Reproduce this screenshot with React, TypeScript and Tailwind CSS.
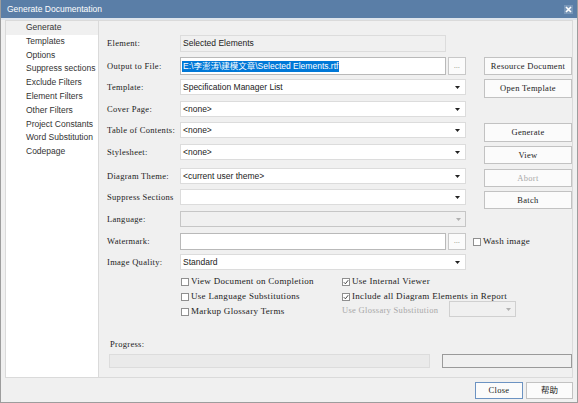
import React from "react";

const sans = "font-['Liberation_Sans','Noto_Sans_CJK_SC',sans-serif]";
const serif = "font-['Liberation_Serif','Noto_Sans_CJK_SC',serif] tracking-[0.3px]";

const navItems = [
  "Generate",
  "Templates",
  "Options",
  "Suppress sections",
  "Exclude Filters",
  "Element Filters",
  "Other Filters",
  "Project Constants",
  "Word Substitution",
  "Codepage",
];

type Row = {
  label: string;
  kind: "static" | "file" | "select" | "disabled";
  value?: string;
  mt: string;
  h: string;
};

const rows: Row[] = [
  { label: "Element:", kind: "static", value: "Selected Elements", mt: "mt-[14px]", h: "h-[17px]" },
  { label: "Output to File:", kind: "file", value: "E:\\李澎涛\\建模文章\\Selected Elements.rtf", mt: "mt-[5px]", h: "h-[18px]" },
  { label: "Template:", kind: "select", value: "Specification Manager List", mt: "mt-[4px]", h: "h-[16px]" },
  { label: "Cover Page:", kind: "select", value: "<none>", mt: "mt-[6px]", h: "h-[16px]" },
  { label: "Table of Contents:", kind: "select", value: "<none>", mt: "mt-[5px]", h: "h-[16px]" },
  { label: "Stylesheet:", kind: "select", value: "<none>", mt: "mt-[6px]", h: "h-[16px]" },
  { label: "Diagram Theme:", kind: "select", value: "<current user theme>", mt: "mt-[8px]", h: "h-[16px]" },
  { label: "Suppress Sections", kind: "select", value: "", mt: "mt-[5px]", h: "h-[16px]" },
  { label: "Language:", kind: "disabled", value: "", mt: "mt-[6px]", h: "h-[16px]" },
  { label: "Watermark:", kind: "file", value: "", mt: "mt-[6px]", h: "h-[17px]" },
  { label: "Image Quality:", kind: "select", value: "Standard", mt: "mt-[4px]", h: "h-[16px]" },
];

function Arrow({ muted }: { muted?: boolean }) {
  return (
    <svg width="5" height="3" viewBox="0 0 5 3" className="shrink-0">
      <path d="M0 0h5L2.5 3z" fill={muted ? "#b0b0b0" : "#222"} />
    </svg>
  );
}

function Check({ on }: { on?: boolean }) {
  return (
    <span className="flex h-[8px] w-[8px] shrink-0 items-center justify-center border border-[#8f8f8f] bg-white">
      {on && (
        <svg width="6" height="6" viewBox="0 0 6 6">
          <path d="M0.8 3.2 L2.4 4.8 L5.2 1.2" fill="none" stroke="#333" strokeWidth="0.9" />
        </svg>
      )}
    </span>
  );
}

function CheckItem({ label, on }: { label: string; on?: boolean }) {
  return (
    <div className="flex h-[15px] items-center gap-[2px]">
      <Check on={on} />
      <span className={`${serif} text-[9px] text-[#222]`}>{label}</span>
    </div>
  );
}

function Btn({ label, h, mt, muted }: { label: string; h: string; mt: string; muted?: boolean }) {
  return (
    <div
      className={`${mt} ${h} ml-[11px] flex w-[88px] items-center justify-center border border-[#c2c2c2] bg-[#fbfbfb] ${serif} text-[8.5px] ${muted ? "text-[#a8a8a8]" : "text-[#222]"}`}
    >
      {label}
    </div>
  );
}

function Control({ row }: { row: Row }) {
  if (row.kind === "static") {
    return (
      <div className={`flex h-full w-[266px] items-center border border-[#dcdcdc] bg-[#f0f0f0] px-[2px] ${sans} text-[8.5px] text-[#222]`}>
        {row.value}
      </div>
    );
  }
  if (row.kind === "file") {
    return (
      <div className="flex h-full items-stretch gap-[2px]">
        <div className={`flex w-[266px] items-center border border-[#b9b9b9] bg-white px-[1px] ${sans} text-[8.5px]`}>
          {row.value && <span className="bg-[#0078d7] px-[1px] leading-[11px] text-white">{row.value}</span>}
        </div>
        <div className={`flex w-[18px] items-center justify-center border border-[#c8c8c8] bg-[#fbfbfb] ${serif} text-[7px] text-[#777]`}>
          ...
        </div>
      </div>
    );
  }
  if (row.kind === "disabled") {
    return (
      <div className="flex h-full w-[286px] items-center justify-end border border-[#c6c6c6] bg-[#f0f0f0] pr-[4px]">
        <Arrow muted />
      </div>
    );
  }
  return (
    <div className={`flex h-full w-[286px] items-center justify-between border border-[#dcdcdc] bg-white pl-[2px] pr-[5px] ${sans} text-[8.5px] text-[#222]`}>
      <span>{row.value}</span>
      <Arrow />
    </div>
  );
}

export default function App() {
  return (
    <div className="flex h-[403px] w-[578px] flex-col border-x border-b border-[#9d9d9d] bg-[#f0f0f0]">
      {/* title bar */}
      <div className="flex h-[18px] shrink-0 items-center justify-between bg-[#5a7ea7] pl-[6px] pr-[4px]">
        <span className={`${sans} text-[8.5px] text-white`}>Generate Documentation</span>
        <svg width="9" height="9" viewBox="0 0 9 9">
          <rect width="9" height="9" fill="#7896b8" />
          <path d="M2 2L7 7M7 2L2 7" stroke="#fff" strokeWidth="1.6" />
        </svg>
      </div>
      <div className="h-[2px] shrink-0 bg-[#dde4ec]" />

      {/* main */}
      <div className="mx-[4px] flex h-[358px] shrink-0 border border-[#dadada]">
        <div className="w-[93px] shrink-0 border-r border-[#dadada] bg-white">
          {navItems.map((item, i) => (
            <div
              key={item}
              className={`h-[13.8px] pl-[20px] ${sans} text-[8.5px] leading-[13.8px] text-[#333] ${i === 0 ? "bg-[#f0f0f0]" : ""}`}
            >
              {item}
            </div>
          ))}
        </div>

        <div className="flex flex-1 flex-col">
          <div className="flex">
            {/* form */}
            <div className="ml-[8px] flex flex-col">
              {rows.map((row) => (
                <div key={row.label} className={`${row.mt} ${row.h} flex items-center`}>
                  <span className={`w-[73px] shrink-0 ${serif} text-[8.5px] text-[#222]`}>{row.label}</span>
                  <Control row={row} />
                </div>
              ))}
            </div>
            {/* side buttons */}
            <div className="ml-[7px] flex flex-col">
              <Btn label="Resource Document" mt="mt-[36px]" h="h-[18px]" />
              <Btn label="Open Template" mt="mt-[4px]" h="h-[19px]" />
              <Btn label="Generate" mt="mt-[25px]" h="h-[19px]" />
              <Btn label="View" mt="mt-[4px]" h="h-[18px]" />
              <Btn label="Abort" mt="mt-[5px]" h="h-[18px]" muted />
              <Btn label="Batch" mt="mt-[4px]" h="h-[18px]" />
              <div className="mt-[25px]">
                <CheckItem label="Wash image" />
              </div>
            </div>
          </div>

          {/* checkboxes */}
          <div className="mt-[4px] ml-[82px] grid grid-cols-[161px_1fr]">
            <CheckItem label="View Document on Completion" />
            <CheckItem label="Use Internal Viewer" on />
            <CheckItem label="Use Language Substitutions" />
            <CheckItem label="Include all Diagram Elements in Report" on />
            <CheckItem label="Markup Glossary Terms" />
            <div className="flex h-[15px] items-start">
              <span className={`w-[107px] ${serif} text-[8.5px] leading-[12px] text-[#a8a8a8]`}>Use Glossary Substitution</span>
              <div className="mt-[-3px] flex h-[16px] w-[67px] items-center justify-end border border-[#d0d0d0] bg-[#f0f0f0] pr-[4px]">
                <Arrow muted />
              </div>
            </div>
          </div>

          {/* progress */}
          <div className={`mt-[19px] ml-[11px] ${serif} text-[8.5px] text-[#222]`}>Progress:</div>
          <div className="mt-[3px] ml-[10px] flex h-[14px] gap-[12px]">
            <div className="w-[321px] border border-[#dcdcdc] bg-[#eaeaea]" />
            <div className="w-[130px] border border-[#9a9a9a] bg-[#f0f0f0]" />
          </div>
        </div>
      </div>

      {/* footer */}
      <div className="mt-[4px] mr-[4px] flex justify-end gap-[3px]">
        <div className={`flex h-[17px] w-[48px] items-center justify-center border border-[#6c93c2] bg-[#fbfbfb] ${serif} text-[8.5px] text-[#222]`}>
          Close
        </div>
        <div className={`flex h-[17px] w-[47px] items-center justify-center border border-[#c2c2c2] bg-[#fbfbfb] ${sans} text-[8.5px] text-[#222]`}>
          帮助
        </div>
      </div>
    </div>
  );
}
